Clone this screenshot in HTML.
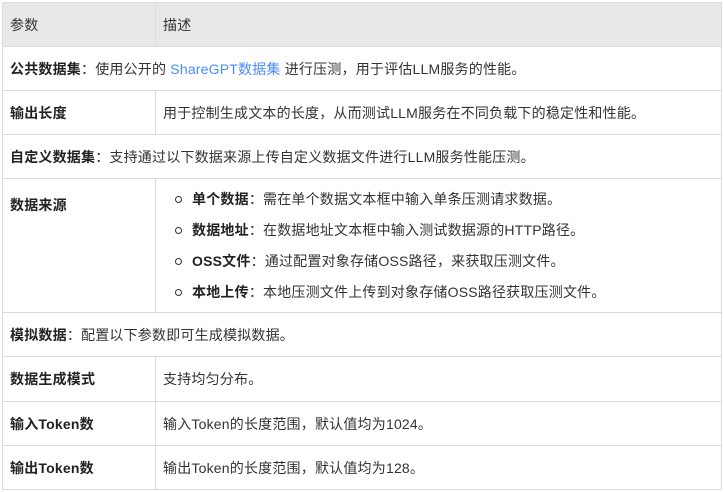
<!DOCTYPE html>
<html><head><meta charset="utf-8"><style>
body{margin:0;background:#fff;font-family:"Liberation Sans","Noto Sans CJK SC",sans-serif;font-size:14px;color:#333;letter-spacing:0.2px;}
.t{position:absolute;left:2px;top:2px;width:720px;border-collapse:collapse;table-layout:fixed;}
.t td{border:1px solid #dcdcdc;padding:0 0 0 7px;vertical-align:middle;white-space:nowrap;}
.t tr{height:44px;}
.h td{background:#e8e8e8;}
b{font-weight:bold;color:#222;}
a{color:#4a8cf7;text-decoration:none;}
ul{margin:0;padding:0;list-style:none;}
li{position:relative;padding-left:29px;height:31px;line-height:31px;}
li:before{content:"";position:absolute;left:12px;top:12px;width:5px;height:5px;border:1px solid #333;border-radius:50%;}
</style></head><body>
<table class="t">
<col style="width:153px"><col>
<tr class="h"><td>参数</td><td>描述</td></tr>
<tr><td colspan="2"><b>公共数据集</b>：使用公开的 <a>ShareGPT数据集</a> 进行压测，用于评估LLM服务的性能。</td></tr>
<tr><td><b>输出长度</b></td><td>用于控制生成文本的长度，从而测试LLM服务在不同负载下的稳定性和性能。</td></tr>
<tr><td colspan="2"><b>自定义数据集</b>：支持通过以下数据来源上传自定义数据文件进行LLM服务性能压测。</td></tr>
<tr style="height:134px"><td style="vertical-align:top;padding-top:16px"><b>数据来源</b></td><td><ul>
<li><b>单个数据</b>：需在单个数据文本框中输入单条压测请求数据。</li>
<li><b>数据地址</b>：在数据地址文本框中输入测试数据源的HTTP路径。</li>
<li><b>OSS文件</b>：通过配置对象存储OSS路径，来获取压测文件。</li>
<li><b>本地上传</b>：本地压测文件上传到对象存储OSS路径获取压测文件。</li>
</ul></td></tr>
<tr><td colspan="2"><b>模拟数据</b>：配置以下参数即可生成模拟数据。</td></tr>
<tr style="height:45px"><td><b>数据生成模式</b></td><td>支持均匀分布。</td></tr>
<tr><td><b>输入Token数</b></td><td>输入Token的长度范围，默认值均为1024。</td></tr>
<tr><td><b>输出Token数</b></td><td>输出Token的长度范围，默认值均为128。</td></tr>
</table>
</body></html>
